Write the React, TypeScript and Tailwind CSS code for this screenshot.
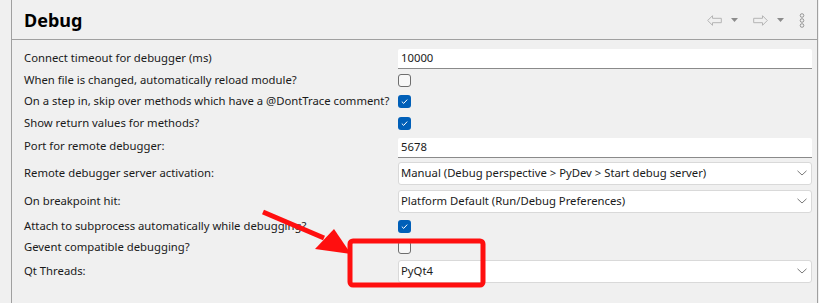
import React from 'react';

type Row = {
    label: string;
    kind: 'text' | 'check' | 'combo';
    value?: string;
    checked?: boolean;
    h: string;
};

const ROWS: Row[] = [
    { label: 'Connect timeout for debugger (ms)', kind: 'text', value: '10000', h: 'h-[22px]' },
    { label: 'When file is changed, automatically reload module?', kind: 'check', checked: false, h: 'h-[22px]' },
    { label: 'On a step in, skip over methods which have a @DontTrace comment?', kind: 'check', checked: true, h: 'h-[21px]' },
    { label: 'Show return values for methods?', kind: 'check', checked: true, h: 'h-[22px]' },
    { label: 'Port for remote debugger:', kind: 'text', value: '5678', h: 'h-[25px]' },
    { label: 'Remote debugger server activation:', kind: 'combo', value: 'Manual (Debug perspective > PyDev > Start debug server)', h: 'h-[28px]' },
    { label: 'On breakpoint hit:', kind: 'combo', value: 'Platform Default (Run/Debug Preferences)', h: 'h-[28px]' },
    { label: 'Attach to subprocess automatically while debugging?', kind: 'check', checked: true, h: 'h-[22px]' },
    { label: 'Gevent compatible debugging?', kind: 'check', checked: false, h: 'h-[21px]' },
    { label: 'Qt Threads:', kind: 'combo', value: 'PyQt4', h: 'h-[26px]' },
];

const Checkbox: React.FC<{ checked?: boolean }> = ({ checked }) =>
    checked ? (
        <div className="w-[13px] h-[13px] rounded-[3px] bg-[#005fb8] flex items-center justify-center">
            <svg width="9" height="9" viewBox="0 0 9 9">
                <path d="M1.8 4.6 L3.7 6.4 L7.2 2.6" fill="none" stroke="white" strokeWidth="1" />
            </svg>
        </div>
    ) : (
        <div className="w-[13px] h-[13px] rounded-[3px] border border-[#6e6e6e] bg-[#f7f7f7]" />
    );

const Chevron = () => (
    <svg width="10" height="6" viewBox="0 0 10 6" className="mr-[4px]">
        <path d="M0.5 0.8 L5 5 L9.5 0.8" fill="none" stroke="#7a7a7a" strokeWidth="1" />
    </svg>
);

const Control: React.FC<{ row: Row }> = ({ row }) => {
    if (row.kind === 'check') return <Checkbox checked={row.checked} />;
    if (row.kind === 'text')
        return (
            <div className="w-[414px] h-[20px] mt-[2px] bg-white border-b border-[#8a8a8a] rounded-t-[2px] flex items-center pl-[3px] text-[#1a1a1a]">
                {row.value}
            </div>
        );
    return (
        <div className="w-[414px] h-[23px] bg-white border border-[#d9d9d9] rounded-[3px] flex items-center justify-between pl-[2px] text-[#1a1a1a]">
            <span>{row.value}</span>
            <Chevron />
        </div>
    );
};

const HeaderIcons = () => (
    <div className="flex items-center gap-[9px] mr-[12px] mt-[1px]">
        <svg width="15" height="11" viewBox="0 0 15 11">
            <path d="M0.7 5.5 L5.5 0.7 L5.5 3.3 L14.3 3.3 L14.3 7.7 L5.5 7.7 L5.5 10.3 Z" fill="none" stroke="#b4b4b4" strokeWidth="1" />
        </svg>
        <svg width="7" height="4" viewBox="0 0 7 4">
            <path d="M0 0 L7 0 L3.5 4 Z" fill="#8c8c8c" />
        </svg>
        <svg width="15" height="11" viewBox="0 0 15 11" className="ml-[6px]">
            <path d="M14.3 5.5 L9.5 0.7 L9.5 3.3 L0.7 3.3 L0.7 7.7 L9.5 7.7 L9.5 10.3 Z" fill="none" stroke="#b4b4b4" strokeWidth="1" />
        </svg>
        <svg width="7" height="4" viewBox="0 0 7 4">
            <path d="M0 0 L7 0 L3.5 4 Z" fill="#8c8c8c" />
        </svg>
        <svg width="6" height="15" viewBox="0 0 6 15" className="ml-[6px]">
            <circle cx="3" cy="2.5" r="1.8" fill="none" stroke="#8c8c8c" strokeWidth="0.9" />
            <circle cx="3" cy="7.5" r="1.8" fill="none" stroke="#8c8c8c" strokeWidth="0.9" />
            <circle cx="3" cy="12.5" r="1.8" fill="none" stroke="#8c8c8c" strokeWidth="0.9" />
        </svg>
    </div>
);

export default function App() {
    return (
        <div
            className="relative w-[819px] h-[303px] bg-[#f0f0f0] overflow-hidden text-[11.3px] text-[#1a1a1a]"
            style={{ fontFamily: '"Noto Sans", "Open Sans", sans-serif' }}
        >
            <div className="ml-[11px] w-[807px] h-full border-l border-r border-[#a0a0a0] flex flex-col">
                {/* Header */}
                <div className="h-[40px] flex items-center justify-between border-b border-[#a0a0a0]">
                    <h1 className="ml-[12px] text-[18px] font-bold text-black mt-[1px]">Debug</h1>
                    <HeaderIcons />
                </div>

                {/* Preference rows */}
                <div className="flex flex-col pt-[7px] pl-[12px]">
                    {ROWS.map((row) => (
                        <div key={row.label} className={`flex items-center ${row.h}`}>
                            <div className="w-[374px] shrink-0 whitespace-nowrap">{row.label}</div>
                            <Control row={row} />
                        </div>
                    ))}
                </div>
            </div>

            {/* Red annotation overlay */}
            <svg className="absolute left-0 top-0 pointer-events-none" width="819" height="303" viewBox="0 0 819 303">
                <rect x="350" y="241" width="133" height="44" rx="3" fill="none" stroke="#ff0f0f" strokeWidth="5" />
                <line x1="263" y1="212" x2="324" y2="238" stroke="#ff0f0f" strokeWidth="5" />
                <path d="M334 229 L351 254 L315 249 Z" fill="#ff0f0f" />
            </svg>
        </div>
    );
}
